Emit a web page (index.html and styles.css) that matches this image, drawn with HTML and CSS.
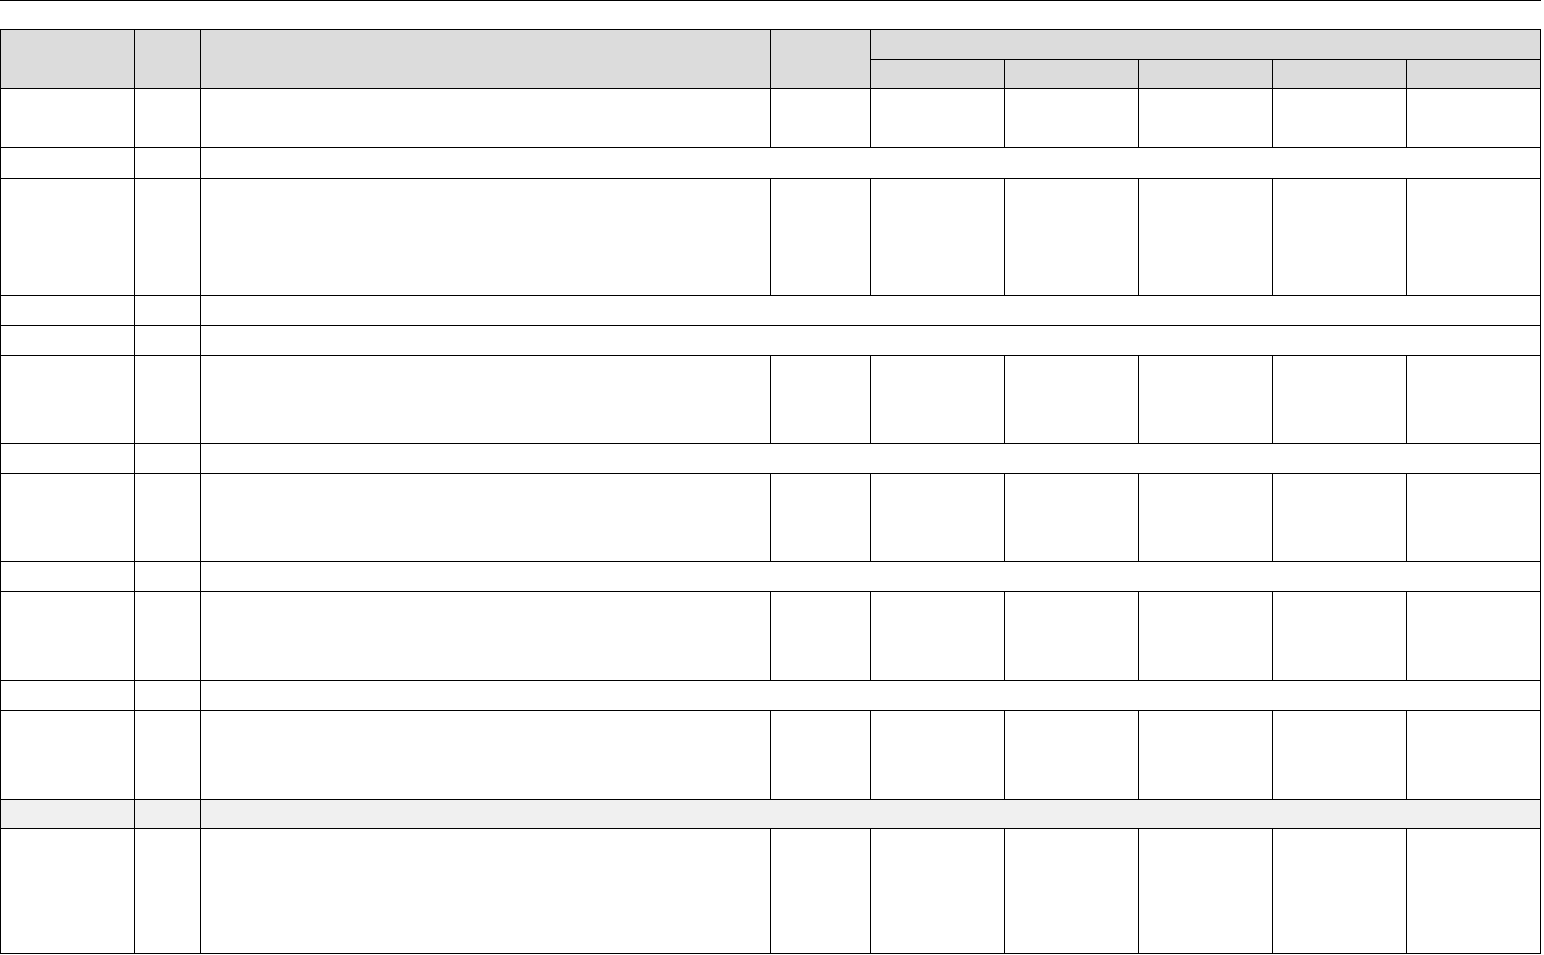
FILE: index.html
```html
<!DOCTYPE html>
<html lang="en">
<head>
<meta charset="utf-8">
<title>Table</title>
<link rel="stylesheet" href="styles.css">
</head>
<body>
<div class="rule"></div>
<table class="grid">
  <colgroup>
    <col class="c-a"><col class="c-b"><col class="c-c"><col class="c-d">
    <col class="c-e"><col class="c-e"><col class="c-e"><col class="c-e"><col class="c-e">
  </colgroup>
  <thead>
    <tr class="h1">
      <th rowspan="2"></th><th rowspan="2"></th><th rowspan="2"></th><th rowspan="2"></th>
      <th colspan="5"></th>
    </tr>
    <tr class="h2">
      <th></th><th></th><th></th><th></th><th></th>
    </tr>
  </thead>
  <tbody>
    <tr class="r59"><td></td><td></td><td></td><td></td><td></td><td></td><td></td><td></td><td></td></tr>
    <tr class="r31"><td></td><td></td><td colspan="7"></td></tr>
    <tr class="r117"><td></td><td></td><td></td><td></td><td></td><td></td><td></td><td></td><td></td></tr>
    <tr class="r30"><td></td><td></td><td colspan="7"></td></tr>
    <tr class="r30"><td></td><td></td><td colspan="7"></td></tr>
    <tr class="r88"><td></td><td></td><td></td><td></td><td></td><td></td><td></td><td></td><td></td></tr>
    <tr class="r30"><td></td><td></td><td colspan="7"></td></tr>
    <tr class="r88"><td></td><td></td><td></td><td></td><td></td><td></td><td></td><td></td><td></td></tr>
    <tr class="r30"><td></td><td></td><td colspan="7"></td></tr>
    <tr class="r89"><td></td><td></td><td></td><td></td><td></td><td></td><td></td><td></td><td></td></tr>
    <tr class="r30"><td></td><td></td><td colspan="7"></td></tr>
    <tr class="r89"><td></td><td></td><td></td><td></td><td></td><td></td><td></td><td></td><td></td></tr>
    <tr class="r29 shaded"><td></td><td></td><td colspan="7"></td></tr>
    <tr class="r125"><td></td><td></td><td></td><td></td><td></td><td></td><td></td><td></td><td></td></tr>
  </tbody>
</table>
</body>
</html>
```
FILE: styles.css
```css
html, body {
  margin: 0;
  padding: 0;
  background: #ffffff;
  font-family: "Liberation Sans", Arial, sans-serif;
}

.rule {
  width: 1541px;
  height: 1px;
  background: #000000;
}

.grid {
  margin-top: 28px;
  border-collapse: collapse;
  table-layout: fixed;
  width: 1541px;
}

.c-a { width: 134px; }
.c-b { width: 66px; }
.c-c { width: 570px; }
.c-d { width: 100px; }
.c-e { width: 134px; }

.grid th,
.grid td {
  border: 1px solid #000000;
  padding: 0;
}

.grid th {
  background: #dcdcdc;
}

.h1 { height: 30px; }
.h2 { height: 29px; }
.r29 { height: 29px; }
.r30 { height: 30px; }
.r31 { height: 31px; }
.r59 { height: 59px; }
.r88 { height: 88px; }
.r89 { height: 89px; }
.r117 { height: 117px; }
.r125 { height: 125px; }

.shaded td {
  background: #f0f0f0;
}
```
